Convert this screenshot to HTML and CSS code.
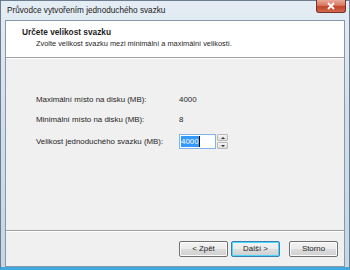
FILE: index.html
```html
<!DOCTYPE html>
<html lang="cs">

<head>
    <meta charset="UTF-8">
    <meta name="viewport" content="width=device-width, initial-scale=1.0">
    <title>Průvodce vytvořením jednoduchého svazku</title>
    <link rel="stylesheet" href="styles.css">
</head>

<body>
    <div class="window">
        <div class="titlebar">
            <span class="title">Průvodce vytvořením jednoduchého svazku</span>
            <div class="close">
                <svg width="10" height="8" viewBox="0 0 10 8">
                    <path d="M2,1 L8,7 M8,1 L2,7"></path>
                </svg>
            </div>
        </div>
        <div class="client">
            <div class="header">
                <div class="heading">Určete velikost svazku</div>
                <div class="sub">Zvolte velikost svazku mezi minimální a maximální velikostí.</div>
            </div>
            <div class="content">
                <div class="form">
                    <span class="label">Maximální místo na disku (MB):</span>
                    <span class="value">4000</span>
                    <span class="label">Minimální místo na disku (MB):</span>
                    <span class="value">8</span>
                    <span class="label">Velikost jednoduchého svazku (MB):</span>
                    <div class="spin">
                        <div class="field"><span class="sel">4000</span><span class="caret"></span></div>
                        <div class="arrows">
                            <div class="arrow up"></div>
                            <div class="arrow down"></div>
                        </div>
                    </div>
                </div>
            </div>
            <div class="footer">
                <div class="btn">&lt; Zpět</div>
                <div class="btn default">Další &gt;</div>
                <div class="btn storno">Storno</div>
            </div>
        </div>
    </div>
</body>

</html>
```

FILE: styles.css
```css
body {
    margin: 0;
    width: 350px;
    height: 270px;
    overflow: hidden;
    font-family: "Liberation Sans", "DejaVu Sans", sans-serif;
    color: #1e1e1e;
}

.window {
    box-sizing: border-box;
    width: 350px;
    height: 270px;
    display: flex;
    flex-direction: column;
    background: linear-gradient(to bottom, #e4edf4 0%, #d3e0eb 40%, #c6d6e4 100%);
    border: 1px solid #6b7d8e;
    border-bottom: 3px solid #3fa9de;
}

.titlebar {
    height: 19px;
    display: flex;
    align-items: flex-start;
    justify-content: space-between;
    padding-left: 6px;
}

.title {
    font-size: 8.2px;
    line-height: 19px;
    color: #1a1a1a;
}

.close {
    width: 28px;
    height: 12px;
    margin-right: 3px;
    margin-top: -1px;
    display: flex;
    align-items: center;
    justify-content: center;
    border: 1px solid #7a3328;
    border-top: none;
    border-radius: 0 0 3px 3px;
    background: linear-gradient(to bottom, #e8a998 0%, #d9775f 45%, #c0432b 55%, #d26a4d 100%);
}

.close svg {
    fill: none;
    stroke: #fff;
    stroke-width: 1.8;
}

.client {
    flex: 1;
    margin: 0 4px 0 4px;
    display: flex;
    flex-direction: column;
    background: #f0f0f0;
    border: 1px solid #8597a8;
}

.header {
    height: 37px;
    background: #fff;
    border-bottom: 1px solid #a0a0a0;
    box-shadow: 0 1px 0 #fff;
    padding-left: 16px;
    box-sizing: border-box;
    padding-top: 5px;
}

.heading {
    font-size: 8.3px;
    font-weight: 700;
    line-height: 12px;
}

.sub {
    font-size: 7.4px;
    line-height: 12px;
    padding-left: 14px;
}

.content {
    flex: 1;
    padding: 36px 0 0 30px;
    border-bottom: 1px solid #a0a0a0;
    box-shadow: 0 1px 0 #fff;
}

.form {
    display: grid;
    grid-template-columns: 143px auto;
    row-gap: 8px;
    align-items: center;
    font-size: 7.9px;
    line-height: 12px;
}

.spin {
    display: flex;
    align-items: center;
}

.field {
    box-sizing: border-box;
    width: 37px;
    height: 15px;
    background: #fff;
    border: 1px solid #7eb4ea;
    display: flex;
    align-items: center;
    padding-left: 1px;
}

.sel {
    background: #3399ff;
    color: #fff;
    line-height: 11px;
}

.caret {
    width: 1px;
    height: 11px;
    background: #000;
}

.arrows {
    margin-left: 1px;
    display: flex;
    flex-direction: column;
    gap: 1px;
}

.arrow {
    box-sizing: border-box;
    width: 11px;
    height: 7px;
    border: 1px solid #b8b8b8;
    border-radius: 1px;
    background: linear-gradient(to bottom, #f4f4f4, #dcdcdc);
    display: flex;
    align-items: center;
    justify-content: center;
}

.arrow:after {
    content: "";
    border-left: 2px solid transparent;
    border-right: 2px solid transparent;
}

.up:after {
    border-bottom: 2px solid #333;
}

.down:after {
    border-top: 2px solid #333;
}

.footer {
    height: 35px;
    display: flex;
    align-items: center;
    padding-left: 173px;
    gap: 3px;
}

.btn {
    box-sizing: border-box;
    width: 49px;
    height: 16px;
    border: 1px solid #707070;
    border-radius: 2px;
    background: linear-gradient(to bottom, #f3f3f3 0%, #ebebeb 50%, #dddddd 51%, #cfcfcf 100%);
    box-shadow: inset 0 0 0 1px #fcfcfc;
    font-size: 7.9px;
    line-height: 14px;
    text-align: center;
}

.default {
    border-color: #3c7fb1;
    box-shadow: inset 0 0 0 1px #48d8fb;
}

.storno {
    margin-left: 6px;
}
```
